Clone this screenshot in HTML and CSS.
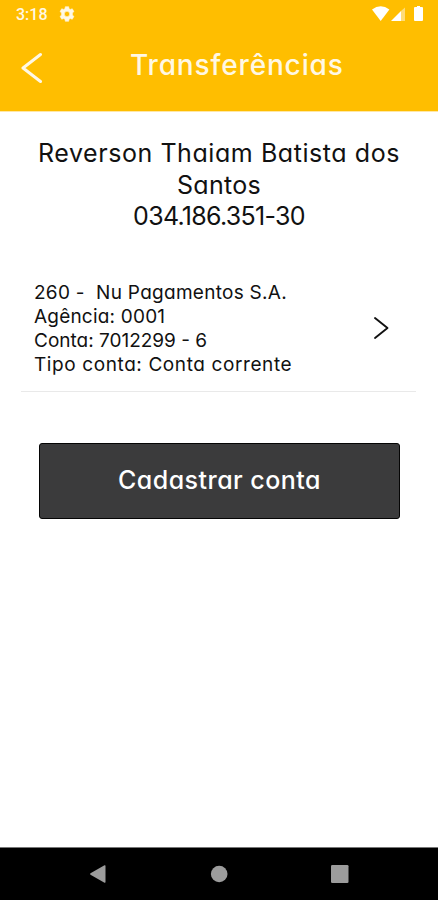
FILE: index.html
```html
<!DOCTYPE html>
<html lang="pt-BR">
<head>
<meta charset="utf-8">
<meta name="viewport" content="width=device-width">
<title>Transferências</title>
<link rel="stylesheet" href="styles.css">
</head>
<body>
<header class="top">
  <div class="status">
    <span class="clock">3:18</span>
    <svg class="gear" width="16" height="16" viewBox="0 0 24 24"><path fill="#fff8e4" stroke="#fff8e4" stroke-width=".8" fill-rule="evenodd" d="M9.500 1h5l.6 3 1.900 1.100 2.900-1 2.500 4.300-2.300 2v3.200l2.300 2-2.500 4.300-2.900-1-1.900 1.100-.6 3h-5l-.6-3L7 18.900l-2.900 1-2.500-4.300 2.300-2v-3.200l-2.300-2L4.100 4.100l2.900 1L8.900 4zM12 8a4 4 0 1 0 0 8 4 4 0 0 0 0-8z"/></svg>
    <svg class="signals" width="54" height="18" viewBox="0 0 54 18">
      <path fill="#fff" d="M0 4.500Q8.700-2 17.400 4.500L8.700 16z"/>
      <path fill="#ffdc78" d="M29 6 33 2.500V16h-4z"/>
      <path fill="#fff" d="M19 16 29 6v10z"/>
      <path fill="#fff" d="M44 2h1V1h3v1h2q1 0 1 1v12q0 1-1 1h-7q-1 0-1-1V3q0-1 1-1z"/>
    </svg>
  </div>
  <div class="bar">
    <svg class="back" width="22" height="32" viewBox="0 0 22 32"><path d="M19.500 2.500 2 16l17.500 13.500" fill="none" stroke="#fff8e4" stroke-width="3" stroke-linecap="round" stroke-linejoin="round"/></svg>
    <h1 class="title">Transferências</h1>
  </div>
</header>
<main class="content">
  <section class="owner">
    <div class="name-first">Reverson Thaiam Batista dos</div>
    <div class="name-last">Santos</div>
    <div class="document">034.186.351-30</div>
  </section>
  <section class="account">
    <div class="details">
      <div class="bank">260 -&nbsp; Nu Pagamentos S.A.</div>
      <div class="agency">Agência: 0001</div>
      <div class="number">Conta: 7012299 - 6</div>
      <div class="kind">Tipo conta: Conta corrente</div>
    </div>
    <svg class="open" width="16" height="24" viewBox="0 0 16 24"><path d="m2 2 12.500 10L2 22" fill="none" stroke="#111" stroke-width="1.900" stroke-linecap="round" stroke-linejoin="round"/></svg>
  </section>
  <button class="register"><span>Cadastrar conta</span></button>
</main>
<nav class="nav">
  <svg width="18" height="18" viewBox="0 0 18 18"><path fill="#9c9c9c" d="M1.500 8.200 15.500 .3q1-.3 1 .7v16q0 1-1 .7L1.500 9.800q-1-.8 0-1.600z"/></svg>
  <svg width="18" height="18" viewBox="0 0 18 18"><circle cx="9.200" cy="9" r="8.300" fill="#9c9c9c"/></svg>
  <svg width="18" height="18" viewBox="0 0 18 18"><rect width="17.500" height="18" rx="1.300" fill="#9c9c9c"/></svg>
</nav>
</body>
</html>
```
FILE: styles.css
```css
* { box-sizing: border-box; }
body {
  margin: 0;
  height: 900px;
  display: flex;
  flex-direction: column;
  background: #fff;
  color: #111;
  font-family: Inter, "Noto Sans", sans-serif;
  font-feature-settings: "cv11" 1;
  white-space: nowrap;
  overflow: hidden;
}
.top { height: 112px; background: #ffbe00; border-bottom: 1px solid #ffe7a6; }
.status { height: 28px; display: flex; align-items: center; padding: 0 16px; }
.clock { width: 43px; font: 500 16px/28px Roboto, sans-serif; color: #fff8e4; padding-top: 1px; }
.signals { margin-left: auto; margin-right: -4px; }
.bar { height: 78px; display: flex; align-items: center; padding-left: 21px; }
.back { margin-top: 2px; }
.title { margin: -5px 0 0 87px; font-size: 28px; line-height: 36px; font-weight: 500; letter-spacing: .85px; color: #fff8e4; }
.content { flex: 1; }
.owner { padding-top: 26px; text-align: center; font-size: 25px; line-height: 31.500px; }
.name-first { letter-spacing: .57px; }
.name-last { letter-spacing: .3px; }
.document { letter-spacing: -.7px; }
.account {
  display: flex;
  align-items: center;
  justify-content: space-between;
  height: 120px;
  margin: 39px 22px 0 21px;
  padding: 0 27px 6px 13px;
  border-bottom: 1px solid #e9e9e9;
  font-size: 19px;
  line-height: 24px;
}
.details { padding-top: 2px; }
.bank { letter-spacing: .28px; }
.agency { letter-spacing: .2px; }
.kind { letter-spacing: .6px; }
.register {
  display: block;
  width: 361px;
  height: 76px;
  margin: 51px 0 0 39px;
  padding: 0 0 1px;
  border: 1.500px solid #050505;
  border-radius: 3px;
  background: #3b3b3c;
  color: #fff;
  font: 500 25px/32px Inter, sans-serif;
  font-feature-settings: "cv11" 1;
  letter-spacing: .47px;
}
.nav {
  height: 53px;
  display: flex;
  justify-content: space-between;
  align-items: center;
  padding: 0 89px;
  background: #000;
  border-top: 1px solid #777;
}
```
